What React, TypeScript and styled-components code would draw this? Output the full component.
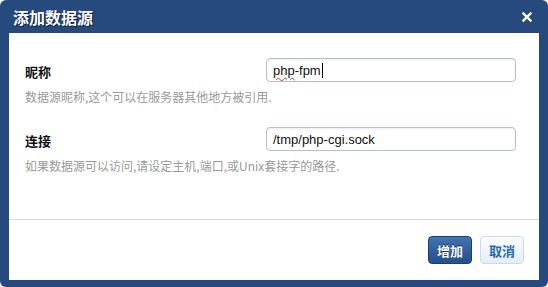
import React from "react";
import styled, { createGlobalStyle } from "styled-components";

const Global = createGlobalStyle`
  html, body { margin: 0; padding: 0; background: #ffffff; }
  body { font-family: "Liberation Sans", "Noto Sans CJK SC", sans-serif; }
`;

const Dialog = styled.div`
  position: relative;
  width: 548px;
  height: 287px;
  box-sizing: border-box;
  background: #264a7e;
  border-radius: 6px;
  padding: 0 9px 7px 9px;
  display: flex;
  flex-direction: column;
  overflow: hidden;
`;

const Header = styled.div`
  height: 33px;
  display: flex;
  align-items: center;
  justify-content: space-between;
  padding: 0 6px 0 4px;
  flex: none;
`;

const Title = styled.h1`
  margin: 0;
  font-family: "Noto Sans CJK SC", sans-serif;
  font-size: 16px;
  font-weight: 700;
  color: #ffffff;
  text-shadow: 1px 1px 0 #0c1d36;
  line-height: 1;
  margin-top: 1px;
`;

const Close = styled.button`
  border: 0;
  background: none;
  padding: 0;
  width: 12px;
  height: 12px;
  display: flex;
  align-items: center;
  justify-content: center;
  cursor: pointer;
  margin-top: 1px;
`;

const Body = styled.div`
  flex: 1;
  background: #ffffff;
  display: flex;
  flex-direction: column;
`;

const Form = styled.div`
  padding: 25px 23px 0 16px;
  height: 187px;
  flex: none;
  box-sizing: border-box;
  border-bottom: 1px solid #d3dbe3;
`;

const Field = styled.div`
  margin-bottom: 22px;
`;

const Row = styled.div`
  display: flex;
  align-items: center;
  justify-content: space-between;
`;

const Label = styled.label`
  font-family: "Noto Sans CJK SC", sans-serif;
  font-size: 13px;
  font-weight: 700;
  color: #111;
  margin-top: 3px;
`;

const Input = styled.div`
  width: 250px;
  height: 24px;
  box-sizing: border-box;
  border: 1px solid #b4bfcf;
  border-radius: 4px;
  box-shadow: inset 0 1px 2px rgba(0, 0, 0, 0.08);
  padding: 0 6px;
  display: flex;
  align-items: center;
  font-family: "Liberation Sans", Arial, sans-serif;
  font-size: 13px;
  color: #111;
`;

const Spell = styled.span`
  text-decoration: underline wavy #e0302a;
  text-decoration-thickness: 1px;
  text-underline-offset: 2px;
`;

const Caret = styled.span`
  display: inline-block;
  width: 1px;
  height: 15px;
  background: #000;
  margin-left: 1px;
`;

const Help = styled.p`
  margin: 7px 0 0 0;
  font-family: "Noto Sans CJK SC", sans-serif;
  font-size: 12px;
  color: #9a9a9a;
  line-height: 16px;
`;

const Footer = styled.div`
  flex: 1;
  display: flex;
  justify-content: flex-end;
  align-items: flex-start;
  gap: 8px;
  padding: 16px 15px 0 0;
`;

const Button = styled.button<{ $primary?: boolean }>`
  width: 44px;
  height: 28px;
  border-radius: 4px;
  font-family: "Noto Sans CJK SC", sans-serif;
  font-size: 13px;
  font-weight: 700;
  padding: 0;
  cursor: pointer;
  border: 1px solid ${(p) => (p.$primary ? "#1d3f6e" : "#cddcec")};
  background: ${(p) =>
    p.$primary
      ? "linear-gradient(#4272b0, #24508c)"
      : "linear-gradient(#fbfdff, #e2edf8)"};
  color: ${(p) => (p.$primary ? "#ffffff" : "#2a68b0")};
  text-shadow: ${(p) => (p.$primary ? "0 -1px 0 #13305a" : "none")};
`;

export default function App() {
  return (
    <>
      <Global />
      <Dialog>
        <Header>
          <Title>添加数据源</Title>
          <Close aria-label="close">
            <svg width="10" height="10" viewBox="0 0 10 10">
              <path d="M1.5 1.5 L8.5 8.5 M8.5 1.5 L1.5 8.5" stroke="#fff" strokeWidth="2.4" strokeLinecap="square" />
            </svg>
          </Close>
        </Header>
        <Body>
          <Form>
            <Field>
              <Row>
                <Label>昵称</Label>
                <Input>
                  <Spell>php</Spell>-fpm<Caret />
                </Input>
              </Row>
              <Help>数据源昵称,这个可以在服务器其他地方被引用.</Help>
            </Field>
            <Field>
              <Row>
                <Label>连接</Label>
                <Input>/tmp/php-cgi.sock</Input>
              </Row>
              <Help>如果数据源可以访问,请设定主机,端口,或Unix套接字的路径.</Help>
            </Field>
          </Form>
          <Footer>
            <Button $primary>增加</Button>
            <Button>取消</Button>
          </Footer>
        </Body>
      </Dialog>
    </>
  );
}
